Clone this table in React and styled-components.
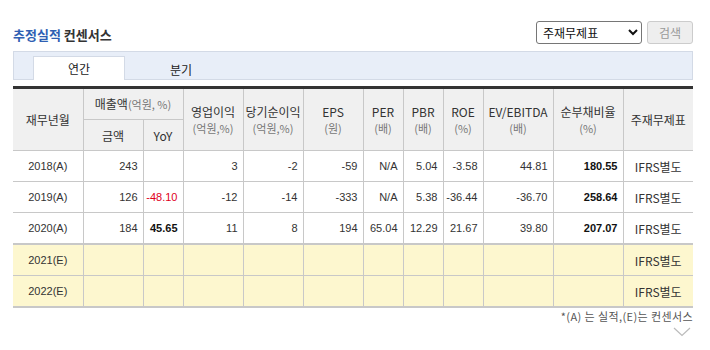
import React from "react";
import styled, { createGlobalStyle } from "styled-components";

const Global = createGlobalStyle`
  html, body { margin: 0; padding: 0; background: #fff; }
  body { font-family: "Liberation Sans", "Noto Sans CJK KR", sans-serif; color: #333; }
`;

const Page = styled.div`
  width: 680px;
  padding: 0 0 0 13px;
`;

const Top = styled.div`
  height: 51px;
  display: flex;
  align-items: flex-end;
  justify-content: space-between;
  box-sizing: border-box;
  padding-bottom: 7px;
`;

const Title = styled.h2`
  margin: 0 0 1px 0;
  font-family: "Noto Sans CJK KR", sans-serif;
  font-size: 13px;
  font-weight: 700;
  color: #333;
  line-height: 16px;
  span { color: #2f5fb3; }
`;

const Controls = styled.div`
  display: flex;
  gap: 5px;
  align-items: center;
`;

const Select = styled.select`
  width: 106px;
  height: 23px;
  border: 1px solid #767676;
  border-radius: 3px;
  background: #fff;
  font-family: "Noto Sans CJK KR", sans-serif;
  font-size: 12px;
  color: #111;
  padding: 0 2px;
`;

const SearchBtn = styled.button`
  width: 46px;
  height: 23px;
  border: 1px solid #ccc;
  border-radius: 3px;
  background: #eee;
  color: #999;
  font-family: "Noto Sans CJK KR", sans-serif;
  font-size: 12px;
  padding: 0;
`;

const TabBar = styled.div`
  height: 29px;
  box-sizing: border-box;
  background: #e8eef8;
  border: 1px solid #d3dae6;
  display: flex;
  align-items: flex-end;
  gap: 10px;
  padding-left: 19px;
`;

const Tab = styled.div`
  width: 92px;
  height: ${(p) => (p.$active ? "24px" : "23px")};
  box-sizing: border-box;
  margin-bottom: -1px;
  background: ${(p) => (p.$active ? "#fff" : "transparent")};
  border: 1px solid ${(p) => (p.$active ? "#d3dae6" : "transparent")};
  border-bottom: none;
  font-family: "Noto Sans CJK KR", sans-serif;
  font-size: 12px;
  color: #222;
  display: flex;
  align-items: center;
  justify-content: center;
`;

const Table = styled.table`
  margin-top: 6px;
  width: 680px;
  border-collapse: collapse;
  table-layout: fixed;
  border-top: 3px solid #333;
  border-bottom: 2px solid #c8c8c8;
  font-size: 11px;
`;

const Th = styled.th`
  background: #f0f0f0;
  font-weight: 400;
  font-family: "Noto Sans CJK KR", sans-serif;
  font-size: 12px;
  color: #333;
  border: 1px solid #c8c8c8;
  border-top: none;
  padding: 0;
  height: 30px;
  line-height: 17px;
  &:first-child { border-left: none; }
  &:last-child { border-right: none; }
`;

const Unit = styled.span`
  display: block;
  font-size: 11px;
  line-height: 17px;
  color: #777;
`;

const Small = styled.span`
  font-size: 11px;
  color: #777;
`;

const Tr = styled.tr`
  background: ${(p) => (p.$est ? "#fdf7cf" : "#fff")};
  border-top: ${(p) => (p.$first ? "2px solid #c8c8c8" : "none")};
`;

const Td = styled.td`
  border: 1px solid #c8c8c8;
  height: 30px;
  padding: 0 5px 0 0;
  text-align: ${(p) => (p.$center ? "center" : "right")};
  font-family: ${(p) => (p.$kr ? '"Noto Sans CJK KR", sans-serif' : '"Liberation Sans", sans-serif')};
  font-size: ${(p) => (p.$kr ? "12px" : "11px")};
  color: ${(p) => p.$color || "#333"};
  font-weight: ${(p) => (p.$bold ? 700 : 400)};
  ${(p) => p.$center && "padding: 0;"}
  &:first-child { border-left: none; }
  &:last-child { border-right: none; }
`;

const Foot = styled.div`
  text-align: right;
  font-family: "Noto Sans CJK KR", sans-serif;
  font-size: 11px;
  letter-spacing: 0.4px;
  color: #555;
  margin-top: 1px;
  line-height: 14px;
`;

const ChevronWrap = styled.div`
  display: flex;
  justify-content: flex-end;
  padding-right: 2px;
  margin-top: 4px;
  svg { display: block; }
`;

const widths = [70, 60, 40, 60, 60, 60, 40, 40, 40, 70, 70, 70];

const rows = [
  { y: "2018(A)", v: ["243", "", "3", "-2", "-59", "N/A", "5.04", "-3.58", "44.81", "180.55"] },
  { y: "2019(A)", v: ["126", "-48.10", "-12", "-14", "-333", "N/A", "5.38", "-36.44", "-36.70", "258.64"] },
  { y: "2020(A)", v: ["184", "45.65", "11", "8", "194", "65.04", "12.29", "21.67", "39.80", "207.07"] },
];

export default function App() {
  return (
    <>
      <Global />
      <Page>
        <Top>
          <Title>
            <span>추정실적</span> 컨센서스
          </Title>
          <Controls>
            <Select defaultValue="a">
              <option value="a">주재무제표</option>
            </Select>
            <SearchBtn>검색</SearchBtn>
          </Controls>
        </Top>
        <TabBar>
          <Tab $active>연간</Tab>
          <Tab>분기</Tab>
        </TabBar>
        <Table>
          <colgroup>
            {widths.map((w, i) => (
              <col key={i} style={{ width: w }} />
            ))}
          </colgroup>
          <thead>
            <tr>
              <Th rowSpan={2}>재무년월</Th>
              <Th colSpan={2}>
                매출액<Small>(억원, %)</Small>
              </Th>
              <Th rowSpan={2}>영업이익<Unit>(억원,%)</Unit></Th>
              <Th rowSpan={2}>당기순이익<Unit>(억원,%)</Unit></Th>
              <Th rowSpan={2}>EPS<Unit>(원)</Unit></Th>
              <Th rowSpan={2}>PER<Unit>(배)</Unit></Th>
              <Th rowSpan={2}>PBR<Unit>(배)</Unit></Th>
              <Th rowSpan={2}>ROE<Unit>(%)</Unit></Th>
              <Th rowSpan={2}>EV/EBITDA<Unit>(배)</Unit></Th>
              <Th rowSpan={2}>순부채비율<Unit>(%)</Unit></Th>
              <Th rowSpan={2}>주재무제표</Th>
            </tr>
            <tr>
              <Th>금액</Th>
              <Th>YoY</Th>
            </tr>
          </thead>
          <tbody>
            {rows.map((r) => (
              <Tr key={r.y}>
                <Td $center>{r.y}</Td>
                {r.v.map((x, i) => (
                  <Td
                    key={i}
                    $bold={i === 9 || (i === 1 && x === "45.65")}
                    $color={i === 1 && x.startsWith("-") ? "#e0001b" : i === 1 || i === 9 ? "#111" : undefined}
                  >
                    {x}
                  </Td>
                ))}
                <Td $center $kr>IFRS별도</Td>
              </Tr>
            ))}
            {["2021(E)", "2022(E)"].map((y, k) => (
              <Tr key={y} $est $first={k === 0}>
                <Td $center>{y}</Td>
                {Array.from({ length: 10 }).map((_, i) => (
                  <Td key={i} />
                ))}
                <Td $center $kr>IFRS별도</Td>
              </Tr>
            ))}
          </tbody>
        </Table>
        <Foot>*(A) 는 실적,(E)는 컨센서스</Foot>
        <ChevronWrap>
          <svg width="18" height="10" viewBox="0 0 18 10">
            <polyline points="1,1 9,8.5 17,1" fill="none" stroke="#bbb" strokeWidth="1.2" />
          </svg>
        </ChevronWrap>
      </Page>
    </>
  );
}
